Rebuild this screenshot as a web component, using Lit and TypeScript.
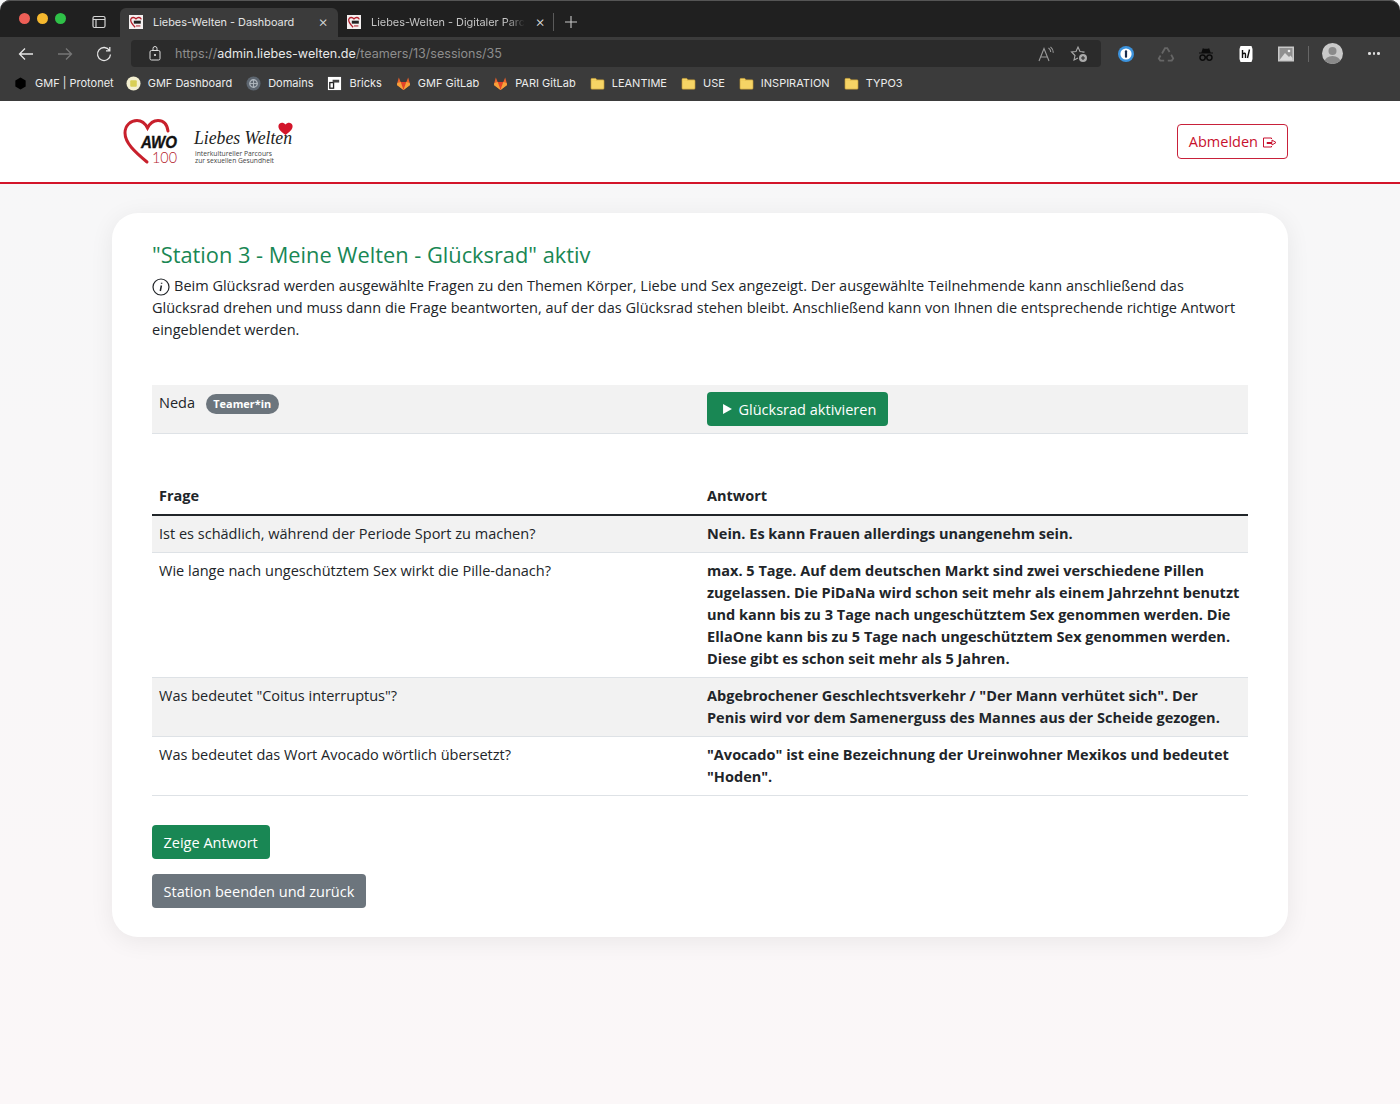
import { LitElement, html, css, svg } from "lit";
import { customElement } from "lit/decorators.js";

const favicon = html`<svg class="fav" viewBox="0 0 16 16"><rect width="16" height="16" fill="#f4f0f0"/><path d="M7 14 C3 10 1.5 7.5 2 5 C2.6 2.5 6 2 8 4.5 C10 2 13.4 2.5 14 5" fill="none" stroke="#b3202c" stroke-width="1.5"/><rect x="5.5" y="6.5" width="8" height="3.4" fill="#222"/><path d="M8 12.5 h5" stroke="#b3202c" stroke-width="1.2"/></svg>`;
const folder = html`<svg class="bm-ico" viewBox="0 0 16 16"><path d="M1 3.5 q0-1 1-1 h4 l1.5 1.6 h6.5 q1 0 1 1 v8 q0 1-1 1 h-12 q-1 0-1-1z" fill="#f6d465" stroke="#b08a2c" stroke-width=".6"/><path d="M1 5 h5 l1.5-1 v1.2 h-6.5z" fill="#e7bf4c"/></svg>`;
const fox = html`<svg class="bm-ico" viewBox="0 0 16 16"><path d="M8 15 L1 9.5 L1.2 8 L3 1.5 L5 6.5 H11 L13 1.5 L14.8 8 L15 9.5Z" fill="#e8622c"/><path d="M8 15 L5 6.5 H11Z" fill="#e24329"/><path d="M8 15 L1 9.5 L1.4 7.5 L5 6.5Z M8 15 L15 9.5 L14.6 7.5 L11 6.5Z" fill="#f6a13a"/></svg>`;

const bookmarks = [
  { t: "GMF | Protonet", i: html`<svg class="bm-ico" viewBox="0 0 16 16"><path d="M8 1.5 L13.5 4.7 V11.3 L8 14.5 L2.5 11.3 V4.7Z" fill="#000"/></svg>` },
  { t: "GMF Dashboard", i: html`<svg class="bm-ico" viewBox="0 0 16 16"><circle cx="8" cy="8" r="7.5" fill="#f3efd0"/><rect x="4.5" y="4.5" width="7" height="7" rx="1" fill="#d8cf55"/></svg>` },
  { t: "Domains", i: html`<svg class="bm-ico" viewBox="0 0 16 16"><circle cx="8" cy="8" r="7.5" fill="#5d6670"/><circle cx="8" cy="8" r="4" fill="none" stroke="#aeb6bd" stroke-width="1.4"/><path d="M4 8 h8 M8 4 v8" stroke="#aeb6bd"/></svg>` },
  { t: "Bricks", i: html`<svg class="bm-ico" viewBox="0 0 16 16"><rect x="1" y="1" width="14" height="14" fill="#fff"/><rect x="3" y="7" width="4" height="6" fill="none" stroke="#222" stroke-width="1.4"/><rect x="6" y="4" width="7" height="3" fill="#444"/></svg>` },
  { t: "GMF GitLab", i: fox },
  { t: "PARI GitLab", i: fox },
  { t: "LEANTIME", i: folder },
  { t: "USE", i: folder },
  { t: "INSPIRATION", i: folder },
  { t: "TYPO3", i: folder },
];

const rows = [
  ["Ist es schädlich, während der Periode Sport zu machen?", "Nein. Es kann Frauen allerdings unangenehm sein."],
  ["Wie lange nach ungeschütztem Sex wirkt die Pille-danach?", "max. 5 Tage. Auf dem deutschen Markt sind zwei verschiedene Pillen zugelassen. Die PiDaNa wird schon seit mehr als einem Jahrzehnt benutzt und kann bis zu 3 Tage nach ungeschütztem Sex genommen werden. Die EllaOne kann bis zu 5 Tage nach ungeschütztem Sex genommen werden. Diese gibt es schon seit mehr als 5 Jahren."],
  ["Was bedeutet \"Coitus interruptus\"?", "Abgebrochener Geschlechtsverkehr / \"Der Mann verhütet sich\". Der\nPenis wird vor dem Samenerguss des Mannes aus der Scheide gezogen."],
  ["Was bedeutet das Wort Avocado wörtlich übersetzt?", "\"Avocado\" ist eine Bezeichnung der Ureinwohner Mexikos und bedeutet \"Hoden\"."],
];

@customElement("app-root")
export class AppRoot extends LitElement {
  static styles = css`
    :host { display: block; width: 1400px; height: 1104px; overflow: hidden; font-family: "Open Sans", sans-serif; color: #212529; background: linear-gradient(#f6f7f8, #fbf7f8); }
    svg { display: block; flex: none; }
    .tabstrip { height: 37px; background: #202020; display: flex; align-items: flex-end; border-radius: 10px 10px 0 0; box-shadow: inset 0 1px 0 #555; }
    .lights { display: flex; gap: 7px; padding: 0 0 13px 19px; width: 92px; box-sizing: border-box; }
    .lights i { width: 11px; height: 11px; border-radius: 50%; }
    .win { margin: 0 14px 8px 0; width: 14px; height: 14px; stroke: #d5d5d5; fill: none; }
    .tab, .url, .bm { font-family: Inter, "Liberation Sans", sans-serif; }
    .tab { width: 218px; height: 29px; box-sizing: border-box; display: flex; align-items: center; gap: 10px; padding: 0 10px 2px 9px; font-size: 10.9px; color: #e4e4e4; border-radius: 6px 6px 0 0; white-space: nowrap; }
    .tab.on { background: #3b3b3b; }
    .tab.off { width: 215px; padding-right: 8px; color: #c5c5c5; }
    .tab.off span { -webkit-mask-image: linear-gradient(90deg, #000 88%, transparent); mask-image: linear-gradient(90deg, #000 88%, transparent); }
    .tab span { flex: 1; overflow: hidden; }
    .tab b { font-weight: 300; font-size: 15px; color: #ddd; line-height: 1; }
    .fav { width: 14px; height: 14px; }
    .plus { width: 16px; height: 16px; margin: 0 0 7px 9px; stroke: #c8c8c8; }
    .sep { width: 1px; height: 18px; background: #5a5a5a; margin: 0 0 6px 0; }
    .toolbar { height: 30px; background: #3b3b3b; display: flex; align-items: center; padding-top: 3px; box-sizing: border-box; }
    .nav { display: flex; align-items: center; width: 131px; padding-left: 17px; gap: 21px; box-sizing: border-box; }
    .nav svg { width: 18px; height: 18px; fill: none; stroke: #e6e6e6; stroke-width: 1.3; }
    .nav svg.dim { stroke: #777; }
    .url { width: 970px; height: 27px; background: #2b2b2b; border-radius: 4px; display: flex; align-items: center; padding: 0 13px 0 18px; box-sizing: border-box; font-size: 12.55px; color: #8d8d8d; }
    .url em { font-style: normal; color: #e8e8e8; }
    .url .lock { width: 12px; height: 15px; margin-right: 14px; stroke: #ddd; fill: none; }
    .url .sp { flex: 1; }
    .url .ra { width: 16px; height: 16px; stroke: #9a9a9a; fill: none; margin-right: 16px; }
    .url .fa { width: 18px; height: 18px; stroke: #aaa; fill: none; }
    .exts { flex: 1; display: flex; align-items: center; padding-left: 16px; gap: 22px; }
    .exts svg { width: 18px; height: 18px; }
    .exts .s { width: 1px; height: 16px; background: #666; margin: 0 -9px 0 -9px; }
    .exts svg.avatar { width: 21px; height: 21px; }
    .exts .more { display: flex; gap: 2px; margin-left: 3px; }
    .exts .more i { width: 2.5px; height: 2.5px; border-radius: 50%; background: #ddd; }
    .bookmarks { height: 34px; background: #3b3b3b; display: flex; align-items: center; padding: 0 0 2px 13px; gap: 14px; box-sizing: border-box; }
    .bm { display: flex; align-items: center; gap: 7px; font-size: 11px; color: #ececec; white-space: nowrap; }
    .bm:first-child { margin-right: -2px; }
    .bm-ico { width: 15px; height: 15px; }
    header { height: 83px; box-sizing: border-box; background: #fff; border-bottom: 2px solid #d3152a; display: flex; align-items: center; justify-content: space-between; padding: 0 112px 0 122px; }
    .logo { width: 176px; height: 62px; overflow: visible; }
    .logout { display: flex; align-items: center; gap: 4px; height: 35px; box-sizing: border-box; padding: 0 10px 0 11px; border: 1px solid #c8213a; border-radius: 4px; background: #fff; color: #c8102e; font: 400 14.5px "Open Sans", sans-serif; }
    .logout svg { width: 15px; height: 15px; fill: none; stroke: #c8102e; stroke-width: 1; margin-top: 2px; }
    .card { margin: 29px 112px 0; height: 724px; box-sizing: border-box; padding: 27px 40px 0; background: #fff; border-radius: 26px; box-shadow: 0 4px 24px rgba(0,0,0,.07); }
    h1 { margin: 0 0 5px; font-size: 21.8px; line-height: 29px; font-weight: 400; color: #198754; }
    p { margin: 0; font-size: 14.53px; line-height: 22px; height: 66px; }
    .info { display: inline-block; width: 18px; height: 18px; vertical-align: -5px; margin-right: 4px; stroke: #212529; fill: none; }
    table { width: 100%; border-collapse: collapse; table-layout: fixed; font-size: 14.53px; line-height: 22px; }
    td, th { padding: 6px 7px 8px; vertical-align: top; text-align: left; border-bottom: 1px solid #dee2e6; }
    td:first-child, th:first-child { width: 548px; box-sizing: border-box; }
    .odd td { background: #f2f2f2; }
    .t1 { margin-top: 45px; }
    .t1 td:last-child { padding: 6.5px 7px 7px; }
    .t2 { margin-top: 39.5px; }
    .t2 th { border-bottom: 2px solid #212529; font-weight: 700; padding: 10px 7px 8px; }
    .t2 td:last-child { font-weight: 700; white-space: pre-line; }
    .badge { display: inline-block; margin-left: 7px; padding: 0 7.5px; height: 20px; line-height: 20px; border-radius: 10px; background: #6c757d; color: #fff; font-size: 10.9px; font-weight: 700; vertical-align: 0; }
    .btn { display: inline-flex; align-items: center; height: 34.5px; box-sizing: border-box; padding: 0 12px 0 11.5px; border-radius: 4px; border: 0; color: #fff; font: 400 14.53px "Open Sans", sans-serif; background: #198754; white-space: nowrap; vertical-align: top; }
    .grey { background: #6c757d; }
    .play { width: 9px; height: 10px; fill: #fff; margin: 1px 7px 0 4px; }
    .acts { display: flex; flex-direction: column; align-items: flex-start; gap: 14.5px; margin-top: 29px; }
  `;

  logo() {
    return svg`<svg class="logo" viewBox="0 0 176 62">
      <path d="M25 51 C13 41 3 32 3 22 C3 14 9 9.5 15 9.5 C19 9.5 23 12 25.5 17 C28 12 32 9.5 36 9.5 C41 9.5 45 13 46 20" fill="none" stroke="#c8202c" stroke-width="3" stroke-linecap="round"/>
      <text x="19" y="37" font-family="Liberation Sans, sans-serif" font-weight="700" font-style="italic" font-size="17" textLength="36" lengthAdjust="spacingAndGlyphs" fill="#111" stroke="#111" stroke-width=".4">AWO</text>
      <text x="30" y="52" font-family="Lato, sans-serif" font-weight="300" font-size="15" textLength="25" lengthAdjust="spacingAndGlyphs" fill="#b3202c">100</text>
      <text x="72" y="33" font-family="Liberation Serif, serif" font-style="italic" font-size="19" textLength="98" lengthAdjust="spacingAndGlyphs" fill="#222">Liebes Welten</text>
      <path d="M163.5 24 C158 20 156 17.5 156.5 14.5 C157.3 11 161.5 11 163.5 13.5 C165.5 11 169.7 11 170.5 14.5 C171 17.5 169 20 163.5 24Z" fill="#d3152a"/>
      <text x="73" y="44.5" font-family="Open Sans, sans-serif" font-size="6.2" textLength="77" lengthAdjust="spacingAndGlyphs" fill="#444">interkultureller Parcours</text>
      <text x="73" y="51.5" font-family="Open Sans, sans-serif" font-size="6.2" textLength="79" lengthAdjust="spacingAndGlyphs" fill="#444">zur sexuellen Gesundheit</text>
    </svg>`;
  }

  render() {
    return html`
      <div class="tabstrip">
        <div class="lights"><i style="background:#ee5f57"></i><i style="background:#f5b82e"></i><i style="background:#2fc148"></i></div>
        <svg class="win" viewBox="0 0 14 14"><rect x="1" y="1.5" width="12" height="11" rx="1.5" stroke-width="1.2"/><path d="M1 4.5 h12 M4 4.5 v8" stroke-width="1.2"/></svg>
        <div class="tab on">${favicon}<span>Liebes-Welten - Dashboard</span><b>×</b></div>
        <div class="tab off">${favicon}<span>Liebes-Welten - Digitaler Parc</span><b>×</b></div>
        <div class="sep"></div>
        <svg class="plus" viewBox="0 0 16 16"><path d="M8 2 v12 M2 8 h12" stroke-width="1.1"/></svg>
      </div>
      <div class="toolbar">
        <div class="nav">
          <svg viewBox="0 0 18 18"><path d="M16 9 H2.5 M8 3.5 L2.5 9 L8 14.5"/></svg>
          <svg class="dim" viewBox="0 0 18 18"><path d="M2 9 H15.5 M10 3.5 L15.5 9 L10 14.5"/></svg>
          <svg viewBox="0 0 18 18"><path d="M14.5 5.5 A6.5 6.5 0 1 0 15.5 9.5 M14.8 2 V5.8 H11"/></svg>
        </div>
        <div class="url">
          <svg class="lock" viewBox="0 0 12 15"><rect x="1" y="4.5" width="10" height="9.5" rx="1.5"/><path d="M4 4.5 V2.5 a2 2 0 0 1 4 0 V4.5"/><circle cx="6" cy="9" r=".7" fill="#ddd"/></svg>
          <span>https://<em>admin.liebes-welten.de</em>/teamers/13/sessions/35</span>
          <span class="sp"></span>
          <svg class="ra" viewBox="0 0 16 16"><path d="M1 15 L6 2.5 L11 15 M3 11 H9 M10.5 2 q2.2 1.5 2.2 4 M12.5 .8 q3 2.5 2.7 6" stroke-width="1.1"/></svg>
          <svg class="fa" viewBox="0 0 18 18"><path d="M12.5 7.5 L14.5 7 L10 6.5 L8 2 L6 6.5 L1.5 7 L5 10.5 L4 15 L8 13" stroke-width="1.1"/><circle cx="13" cy="13" r="4" fill="#aaa" stroke="none"/><path d="M13 11 v4 M11 13 h4" stroke="#2b2b2b" stroke-width="1.1"/></svg>
        </div>
        <div class="exts">
          <svg viewBox="0 0 18 18"><circle cx="9" cy="9" r="8" fill="#3c93dd"/><circle cx="9" cy="9" r="5.6" fill="#fff"/><rect x="7.9" y="5.2" width="2.2" height="7.6" rx="1" fill="#1a2c4d"/></svg>
          <svg viewBox="0 0 18 18" fill="none" stroke="#666" stroke-width="1.8"><path d="M5 8.5 L8 3.2 H10.2 L12.6 7 M14.2 9.8 L16.2 13.4 L14.8 15.6 H10.8 M7.2 15.6 H3.2 L1.8 13.4 L3.6 10.6"/></svg>
          <svg viewBox="0 0 18 18"><path d="M2 8.6 H16 V7.6 H13.6 L12.2 3.2 Q9 4.4 5.8 3.2 L4.4 7.6 H2Z" fill="#0c0c0c"/><circle cx="5.6" cy="12.6" r="2.6" fill="none" stroke="#0c0c0c" stroke-width="1.5"/><circle cx="12.4" cy="12.6" r="2.6" fill="none" stroke="#0c0c0c" stroke-width="1.5"/><path d="M8 12.2 H10" stroke="#0c0c0c" stroke-width="1.2"/></svg>
          <svg viewBox="0 0 18 18"><path d="M3.5 1 H14.5 L15.5 4 V14 L14.5 17 H3.5 L2.5 14 V4Z" fill="#fff"/><path d="M5.5 5 V13 M5.5 9 Q8.5 7 8.5 10 V13 M12.5 4.5 L10.5 13" stroke="#111" stroke-width="1.4" fill="none"/></svg>
          <svg viewBox="0 0 18 18"><rect x="1" y="1.5" width="16" height="15" fill="#c8c8c8"/><rect x="2.5" y="3" width="13" height="12" fill="#8f8f8f"/><path d="M2.5 15 L8 8 L12 12 L13.5 10.5 L15.5 13 V15Z" fill="#d8d8d8"/><circle cx="12" cy="6" r="1.3" fill="#eee"/></svg>
          <div class="s"></div>
          <svg class="avatar" viewBox="0 0 21 21"><defs><clipPath id="av"><circle cx="10.5" cy="10.5" r="10.5"/></clipPath></defs><g clip-path="url(#av)"><rect width="21" height="21" fill="#c9c9c9"/><circle cx="10.5" cy="8" r="4" fill="#8a8a8a"/><ellipse cx="10.5" cy="19" rx="8" ry="6" fill="#8a8a8a"/></g></svg>
          <div class="more"><i></i><i></i><i></i></div>
        </div>
      </div>
      <div class="bookmarks">
        ${bookmarks.map((b) => html`<div class="bm">${b.i}<span>${b.t}</span></div>`)}
      </div>
      <header>
        ${this.logo()}
        <button class="logout">Abmelden
          <svg viewBox="0 0 15 15"><path d="M9.5 4 V3 H1.5 V12 H9.5 V11 M5 7.5 H10 V5 L14 7.5 L10 10 V8.5 H5Z"/></svg>
        </button>
      </header>
      <main class="card">
        <h1>"Station 3 - Meine Welten - Glücksrad" aktiv</h1>
        <p><svg class="info" viewBox="0 0 18 18"><circle cx="9" cy="9" r="8" stroke-width="1.2"/><path d="M9.4 7.5 L8.3 13 M9.6 4.8 v1" stroke-width="1.5"/></svg>Beim Glücksrad werden ausgewählte Fragen zu den Themen Körper, Liebe und Sex angezeigt. Der ausgewählte Teilnehmende kann anschließend das Glücksrad drehen und muss dann die Frage beantworten, auf der das Glücksrad stehen bleibt. Anschließend kann von Ihnen die entsprechende richtige Antwort eingeblendet werden.</p>
        <table class="t1">
          <tr class="odd">
            <td>Neda <span class="badge">Teamer*in</span></td>
            <td><button class="btn"><svg class="play" viewBox="0 0 8 9"><path d="M0 0 L8 4.5 L0 9Z"/></svg>Glücksrad aktivieren</button></td>
          </tr>
        </table>
        <table class="t2">
          <tr><th>Frage</th><th>Antwort</th></tr>
          ${rows.map((r, i) => html`<tr class=${i % 2 === 0 ? "odd" : ""}><td>${r[0]}</td><td>${r[1]}</td></tr>`)}
        </table>
        <div class="acts">
          <button class="btn">Zeige Antwort</button>
          <button class="btn grey">Station beenden und zurück</button>
        </div>
      </main>
    `;
  }
}
